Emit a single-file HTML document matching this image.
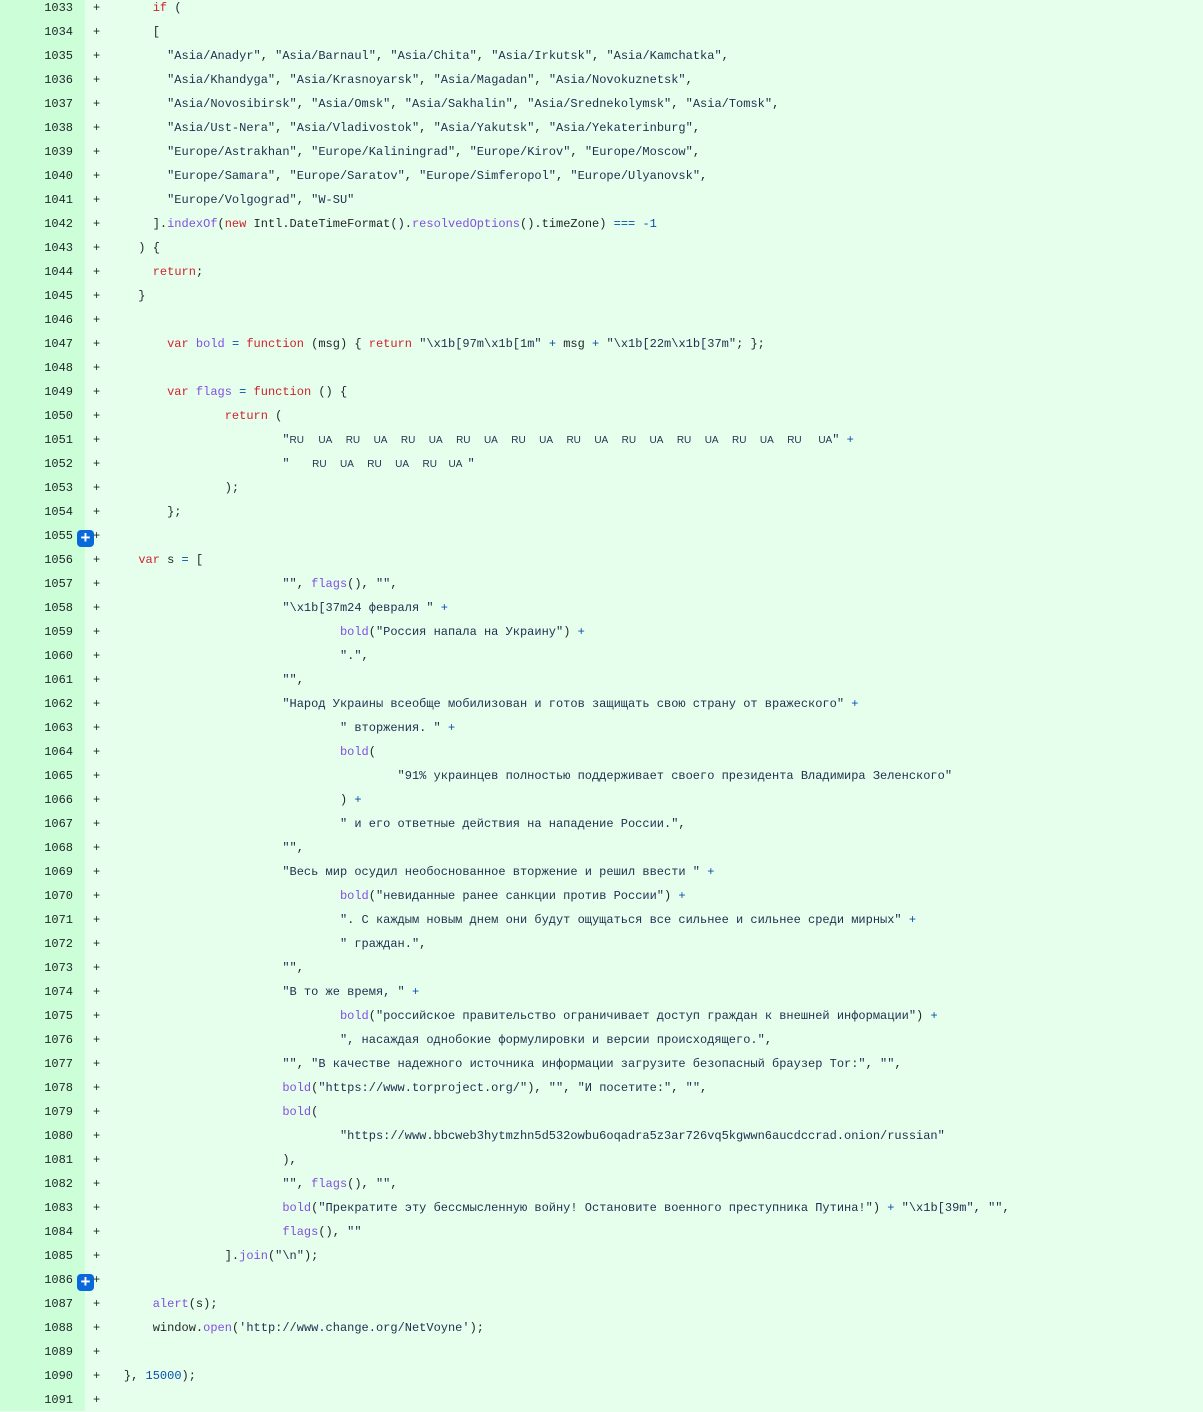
<!DOCTYPE html>
<html><head><meta charset="utf-8"><style>
html,body{margin:0;padding:0;}
body{width:1203px;height:1411px;overflow:hidden;background:#e6ffec;position:relative;font-family:"Liberation Mono",monospace;font-size:12px;color:#1f2328;}
.gut{position:absolute;left:0;top:0;width:85px;height:1411px;background:#ccffd8;}
#rows{position:absolute;left:0;top:-4px;width:1203px;}
.r{position:relative;height:24px;line-height:24px;white-space:pre;}
.n{position:absolute;left:0;width:73px;text-align:right;color:#1f2328;}
.p{position:absolute;left:93px;color:#1f2328;}
.c{position:absolute;left:109.5px;}
.k{color:#cf222e}.f{color:#8250df}.s{color:#1c2f4f}.o{color:#0550ae}
.fl{display:inline-block;width:27.6px;font-family:"Liberation Sans",sans-serif;font-size:10px;color:#1c2f4f;text-align:center;}
.btn{position:absolute;left:77px;top:6px;width:17px;height:17px;border-radius:4px;background:#0969da;color:#fff;font-family:"Liberation Sans",sans-serif;font-size:17px;line-height:16px;text-align:center;font-weight:bold;}
</style></head><body>
<div class="gut"></div>
<div id="rows">
<div class="r"><span class="n">1033</span><span class="p">+</span><span class="c">      <span class="k">if</span> (</span></div>
<div class="r"><span class="n">1034</span><span class="p">+</span><span class="c">      [</span></div>
<div class="r"><span class="n">1035</span><span class="p">+</span><span class="c">        <span class="s">"Asia/Anadyr"</span>, <span class="s">"Asia/Barnaul"</span>, <span class="s">"Asia/Chita"</span>, <span class="s">"Asia/Irkutsk"</span>, <span class="s">"Asia/Kamchatka"</span>,</span></div>
<div class="r"><span class="n">1036</span><span class="p">+</span><span class="c">        <span class="s">"Asia/Khandyga"</span>, <span class="s">"Asia/Krasnoyarsk"</span>, <span class="s">"Asia/Magadan"</span>, <span class="s">"Asia/Novokuznetsk"</span>,</span></div>
<div class="r"><span class="n">1037</span><span class="p">+</span><span class="c">        <span class="s">"Asia/Novosibirsk"</span>, <span class="s">"Asia/Omsk"</span>, <span class="s">"Asia/Sakhalin"</span>, <span class="s">"Asia/Srednekolymsk"</span>, <span class="s">"Asia/Tomsk"</span>,</span></div>
<div class="r"><span class="n">1038</span><span class="p">+</span><span class="c">        <span class="s">"Asia/Ust-Nera"</span>, <span class="s">"Asia/Vladivostok"</span>, <span class="s">"Asia/Yakutsk"</span>, <span class="s">"Asia/Yekaterinburg"</span>,</span></div>
<div class="r"><span class="n">1039</span><span class="p">+</span><span class="c">        <span class="s">"Europe/Astrakhan"</span>, <span class="s">"Europe/Kaliningrad"</span>, <span class="s">"Europe/Kirov"</span>, <span class="s">"Europe/Moscow"</span>,</span></div>
<div class="r"><span class="n">1040</span><span class="p">+</span><span class="c">        <span class="s">"Europe/Samara"</span>, <span class="s">"Europe/Saratov"</span>, <span class="s">"Europe/Simferopol"</span>, <span class="s">"Europe/Ulyanovsk"</span>,</span></div>
<div class="r"><span class="n">1041</span><span class="p">+</span><span class="c">        <span class="s">"Europe/Volgograd"</span>, <span class="s">"W-SU"</span></span></div>
<div class="r"><span class="n">1042</span><span class="p">+</span><span class="c">      ].<span class="f">indexOf</span>(<span class="k">new</span> Intl.DateTimeFormat().<span class="f">resolvedOptions</span>().timeZone) <span class="o">===</span> <span class="o">-1</span></span></div>
<div class="r"><span class="n">1043</span><span class="p">+</span><span class="c">    ) {</span></div>
<div class="r"><span class="n">1044</span><span class="p">+</span><span class="c">      <span class="k">return</span>;</span></div>
<div class="r"><span class="n">1045</span><span class="p">+</span><span class="c">    }</span></div>
<div class="r"><span class="n">1046</span><span class="p">+</span><span class="c"></span></div>
<div class="r"><span class="n">1047</span><span class="p">+</span><span class="c">        <span class="k">var</span> <span class="f">bold</span> <span class="o">=</span> <span class="k">function</span> (msg) { <span class="k">return</span> <span class="s">"\x1b[97m\x1b[1m"</span> <span class="o">+</span> msg <span class="o">+</span> <span class="s">"\x1b[22m\x1b[37m"</span>; };</span></div>
<div class="r"><span class="n">1048</span><span class="p">+</span><span class="c"></span></div>
<div class="r"><span class="n">1049</span><span class="p">+</span><span class="c">        <span class="k">var</span> <span class="f">flags</span> <span class="o">=</span> <span class="k">function</span> () {</span></div>
<div class="r"><span class="n">1050</span><span class="p">+</span><span class="c">                <span class="k">return</span> (</span></div>
<div class="r"><span class="n">1051</span><span class="p">+</span><span class="c">                        <span class="s">"</span><span class="fl" style="width:22px;text-align:left">RU</span><span class="fl">UA</span><span class="fl">RU</span><span class="fl">UA</span><span class="fl">RU</span><span class="fl">UA</span><span class="fl">RU</span><span class="fl">UA</span><span class="fl">RU</span><span class="fl">UA</span><span class="fl">RU</span><span class="fl">UA</span><span class="fl">RU</span><span class="fl">UA</span><span class="fl">RU</span><span class="fl">UA</span><span class="fl">RU</span><span class="fl">UA</span><span class="fl">RU</span><span class="fl" style="width:24px;text-align:right">UA</span><span class="s">"</span> <span class="o">+</span></span></div>
<div class="r"><span class="n">1052</span><span class="p">+</span><span class="c">                        <span class="s">"</span><span class="fl" style="width:16px"></span><span class="fl">RU</span><span class="fl">UA</span><span class="fl">RU</span><span class="fl">UA</span><span class="fl">RU</span><span class="fl" style="width:24px">UA</span><span class="s">"</span></span></div>
<div class="r"><span class="n">1053</span><span class="p">+</span><span class="c">                );</span></div>
<div class="r"><span class="n">1054</span><span class="p">+</span><span class="c">        };</span></div>
<div class="r"><span class="n">1055</span><span class="btn">+</span><span class="p">+</span><span class="c"></span></div>
<div class="r"><span class="n">1056</span><span class="p">+</span><span class="c">    <span class="k">var</span> s <span class="o">=</span> [</span></div>
<div class="r"><span class="n">1057</span><span class="p">+</span><span class="c">                        <span class="s">""</span>, <span class="f">flags</span>(), <span class="s">""</span>,</span></div>
<div class="r"><span class="n">1058</span><span class="p">+</span><span class="c">                        <span class="s">"\x1b[37m24 февраля "</span> <span class="o">+</span></span></div>
<div class="r"><span class="n">1059</span><span class="p">+</span><span class="c">                                <span class="f">bold</span>(<span class="s">"Россия напала на Украину"</span>) <span class="o">+</span></span></div>
<div class="r"><span class="n">1060</span><span class="p">+</span><span class="c">                                <span class="s">"."</span>,</span></div>
<div class="r"><span class="n">1061</span><span class="p">+</span><span class="c">                        <span class="s">""</span>,</span></div>
<div class="r"><span class="n">1062</span><span class="p">+</span><span class="c">                        <span class="s">"Народ Украины всеобще мобилизован и готов защищать свою страну от вражеского"</span> <span class="o">+</span></span></div>
<div class="r"><span class="n">1063</span><span class="p">+</span><span class="c">                                <span class="s">" вторжения. "</span> <span class="o">+</span></span></div>
<div class="r"><span class="n">1064</span><span class="p">+</span><span class="c">                                <span class="f">bold</span>(</span></div>
<div class="r"><span class="n">1065</span><span class="p">+</span><span class="c">                                        <span class="s">"91% украинцев полностью поддерживает своего президента Владимира Зеленского"</span></span></div>
<div class="r"><span class="n">1066</span><span class="p">+</span><span class="c">                                ) <span class="o">+</span></span></div>
<div class="r"><span class="n">1067</span><span class="p">+</span><span class="c">                                <span class="s">" и его ответные действия на нападение России."</span>,</span></div>
<div class="r"><span class="n">1068</span><span class="p">+</span><span class="c">                        <span class="s">""</span>,</span></div>
<div class="r"><span class="n">1069</span><span class="p">+</span><span class="c">                        <span class="s">"Весь мир осудил необоснованное вторжение и решил ввести "</span> <span class="o">+</span></span></div>
<div class="r"><span class="n">1070</span><span class="p">+</span><span class="c">                                <span class="f">bold</span>(<span class="s">"невиданные ранее санкции против России"</span>) <span class="o">+</span></span></div>
<div class="r"><span class="n">1071</span><span class="p">+</span><span class="c">                                <span class="s">". С каждым новым днем они будут ощущаться все сильнее и сильнее среди мирных"</span> <span class="o">+</span></span></div>
<div class="r"><span class="n">1072</span><span class="p">+</span><span class="c">                                <span class="s">" граждан."</span>,</span></div>
<div class="r"><span class="n">1073</span><span class="p">+</span><span class="c">                        <span class="s">""</span>,</span></div>
<div class="r"><span class="n">1074</span><span class="p">+</span><span class="c">                        <span class="s">"В то же время, "</span> <span class="o">+</span></span></div>
<div class="r"><span class="n">1075</span><span class="p">+</span><span class="c">                                <span class="f">bold</span>(<span class="s">"российское правительство ограничивает доступ граждан к внешней информации"</span>) <span class="o">+</span></span></div>
<div class="r"><span class="n">1076</span><span class="p">+</span><span class="c">                                <span class="s">", насаждая однобокие формулировки и версии происходящего."</span>,</span></div>
<div class="r"><span class="n">1077</span><span class="p">+</span><span class="c">                        <span class="s">""</span>, <span class="s">"В качестве надежного источника информации загрузите безопасный браузер Tor:"</span>, <span class="s">""</span>,</span></div>
<div class="r"><span class="n">1078</span><span class="p">+</span><span class="c">                        <span class="f">bold</span>(<span class="s">"https://www.torproject.org/"</span>), <span class="s">""</span>, <span class="s">"И посетите:"</span>, <span class="s">""</span>,</span></div>
<div class="r"><span class="n">1079</span><span class="p">+</span><span class="c">                        <span class="f">bold</span>(</span></div>
<div class="r"><span class="n">1080</span><span class="p">+</span><span class="c">                                <span class="s">"https://www.bbcweb3hytmzhn5d532owbu6oqadra5z3ar726vq5kgwwn6aucdccrad.onion/russian"</span></span></div>
<div class="r"><span class="n">1081</span><span class="p">+</span><span class="c">                        ),</span></div>
<div class="r"><span class="n">1082</span><span class="p">+</span><span class="c">                        <span class="s">""</span>, <span class="f">flags</span>(), <span class="s">""</span>,</span></div>
<div class="r"><span class="n">1083</span><span class="p">+</span><span class="c">                        <span class="f">bold</span>(<span class="s">"Прекратите эту бессмысленную войну! Остановите военного преступника Путина!"</span>) <span class="o">+</span> <span class="s">"\x1b[39m"</span>, <span class="s">""</span>,</span></div>
<div class="r"><span class="n">1084</span><span class="p">+</span><span class="c">                        <span class="f">flags</span>(), <span class="s">""</span></span></div>
<div class="r"><span class="n">1085</span><span class="p">+</span><span class="c">                ].<span class="f">join</span>(<span class="s">"\n"</span>);</span></div>
<div class="r"><span class="n">1086</span><span class="btn">+</span><span class="p">+</span><span class="c"></span></div>
<div class="r"><span class="n">1087</span><span class="p">+</span><span class="c">      <span class="f">alert</span>(s);</span></div>
<div class="r"><span class="n">1088</span><span class="p">+</span><span class="c">      window.<span class="f">open</span>(<span class="s">'http://www.change.org/NetVoyne'</span>);</span></div>
<div class="r"><span class="n">1089</span><span class="p">+</span><span class="c"></span></div>
<div class="r"><span class="n">1090</span><span class="p">+</span><span class="c">  }, <span class="o">15000</span>);</span></div>
<div class="r"><span class="n">1091</span><span class="p">+</span><span class="c"></span></div>
</div>
</body></html>
